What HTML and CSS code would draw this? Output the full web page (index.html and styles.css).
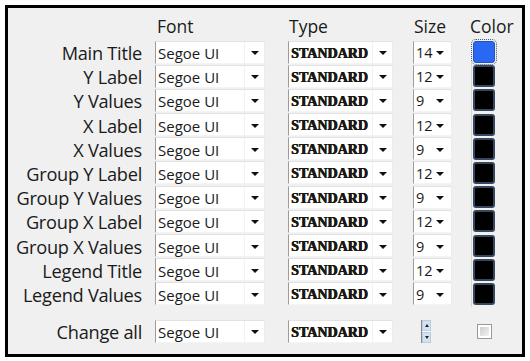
FILE: index.html
```html
<!DOCTYPE html>
<html>
<head>
<meta charset="utf-8">
<link rel="stylesheet" href="styles.css">
</head>
<body>
<div class="frame">
  <div class="row head">
    <div></div>
    <div class="h h-font">Font</div>
    <div class="h">Type</div>
    <div class="h">Size</div>
    <div class="h h-color">Color</div>
  </div>

  <div class="row">
    <div class="lbl">Main Title</div>
    <div class="combo font"><span>Segoe UI</span><i class="btn"><b class="arr"></b></i></div>
    <div class="combo type"><span>STANDARD</span><i class="btn"><b class="arr"></b></i></div>
    <div class="combo size"><span>14</span><b class="arr"></b></div>
    <div class="swcell first"><div class="sw blue"></div></div>
  </div>
  <div class="row">
    <div class="lbl">Y Label</div>
    <div class="combo font"><span>Segoe UI</span><i class="btn"><b class="arr"></b></i></div>
    <div class="combo type"><span>STANDARD</span><i class="btn"><b class="arr"></b></i></div>
    <div class="combo size"><span>12</span><b class="arr"></b></div>
    <div class="swcell"><div class="sw"></div></div>
  </div>
  <div class="row">
    <div class="lbl">Y Values</div>
    <div class="combo font"><span>Segoe UI</span><i class="btn"><b class="arr"></b></i></div>
    <div class="combo type"><span>STANDARD</span><i class="btn"><b class="arr"></b></i></div>
    <div class="combo size"><span>9</span><b class="arr"></b></div>
    <div class="swcell"><div class="sw"></div></div>
  </div>
  <div class="row">
    <div class="lbl">X Label</div>
    <div class="combo font"><span>Segoe UI</span><i class="btn"><b class="arr"></b></i></div>
    <div class="combo type"><span>STANDARD</span><i class="btn"><b class="arr"></b></i></div>
    <div class="combo size"><span>12</span><b class="arr"></b></div>
    <div class="swcell"><div class="sw"></div></div>
  </div>
  <div class="row">
    <div class="lbl">X Values</div>
    <div class="combo font"><span>Segoe UI</span><i class="btn"><b class="arr"></b></i></div>
    <div class="combo type"><span>STANDARD</span><i class="btn"><b class="arr"></b></i></div>
    <div class="combo size"><span>9</span><b class="arr"></b></div>
    <div class="swcell"><div class="sw"></div></div>
  </div>
  <div class="row">
    <div class="lbl">Group Y Label</div>
    <div class="combo font"><span>Segoe UI</span><i class="btn"><b class="arr"></b></i></div>
    <div class="combo type"><span>STANDARD</span><i class="btn"><b class="arr"></b></i></div>
    <div class="combo size"><span>12</span><b class="arr"></b></div>
    <div class="swcell"><div class="sw"></div></div>
  </div>
  <div class="row">
    <div class="lbl">Group Y Values</div>
    <div class="combo font"><span>Segoe UI</span><i class="btn"><b class="arr"></b></i></div>
    <div class="combo type"><span>STANDARD</span><i class="btn"><b class="arr"></b></i></div>
    <div class="combo size"><span>9</span><b class="arr"></b></div>
    <div class="swcell"><div class="sw"></div></div>
  </div>
  <div class="row">
    <div class="lbl">Group X Label</div>
    <div class="combo font"><span>Segoe UI</span><i class="btn"><b class="arr"></b></i></div>
    <div class="combo type"><span>STANDARD</span><i class="btn"><b class="arr"></b></i></div>
    <div class="combo size"><span>12</span><b class="arr"></b></div>
    <div class="swcell"><div class="sw"></div></div>
  </div>
  <div class="row">
    <div class="lbl">Group X Values</div>
    <div class="combo font"><span>Segoe UI</span><i class="btn"><b class="arr"></b></i></div>
    <div class="combo type"><span>STANDARD</span><i class="btn"><b class="arr"></b></i></div>
    <div class="combo size"><span>9</span><b class="arr"></b></div>
    <div class="swcell"><div class="sw"></div></div>
  </div>
  <div class="row">
    <div class="lbl">Legend Title</div>
    <div class="combo font"><span>Segoe UI</span><i class="btn"><b class="arr"></b></i></div>
    <div class="combo type"><span>STANDARD</span><i class="btn"><b class="arr"></b></i></div>
    <div class="combo size"><span>12</span><b class="arr"></b></div>
    <div class="swcell"><div class="sw"></div></div>
  </div>
  <div class="row">
    <div class="lbl">Legend Values</div>
    <div class="combo font"><span>Segoe UI</span><i class="btn"><b class="arr"></b></i></div>
    <div class="combo type"><span>STANDARD</span><i class="btn"><b class="arr"></b></i></div>
    <div class="combo size"><span>9</span><b class="arr"></b></div>
    <div class="swcell"><div class="sw"></div></div>
  </div>

  <div class="row all">
    <div class="lbl">Change all</div>
    <div class="combo font"><span>Segoe UI</span><i class="btn"><b class="arr"></b></i></div>
    <div class="combo type"><span>STANDARD</span><i class="btn"><b class="arr"></b></i></div>
    <div class="spincell">
      <div class="spin"><div class="sb"><b class="up"></b></div><div class="sb"><b class="dn"></b></div></div>
    </div>
    <div class="chkcell"><div class="chk"><div class="chk-in"></div></div></div>
  </div>
</div>
</body>
</html>
```

FILE: styles.css
```css
html, body {
  margin: 0;
  padding: 0;
  background: #ffffff;
}

.frame {
  box-sizing: border-box;
  margin: 5px 0 0 5px;
  width: 520px;
  height: 352px;
  border: 3px solid #000;
  background: #f0f0f0;
  display: flex;
  flex-direction: column;
}

.row {
  display: grid;
  grid-template-columns: 147px 133px 125px 58px 1fr;
  height: 24.2px;
  align-items: center;
}

.row.head {
  height: 31px;
  align-items: end;
}

.h {
  font-family: "Open Sans", sans-serif;
  font-size: 17.5px;
  color: #1a1a1a;
  line-height: 22px;
  padding-bottom: 2px;
  padding-left: 1px;
}
.h-font { padding-left: 2px; }
.h-color { margin-left: -2px; }

.lbl {
  font-family: "Open Sans", sans-serif;
  font-size: 18.2px;
  color: #1a1a1a;
  text-align: right;
  padding-right: 13px;
  white-space: nowrap;
  line-height: 24px;
  letter-spacing: -0.25px;
  padding-top: 2px;
}

.combo {
  box-sizing: border-box;
  height: 23px;
  background: #fff;
  border-top: 1px solid #e2e2e2;
  border-left: 1px solid #9c9c9c;
  border-right: 1px solid #ececec;
  border-bottom: 1px solid #f4f4f4;
  display: flex;
  align-items: center;
}
.combo span {
  flex: 1;
  white-space: nowrap;
}
.combo.font { width: 110px; }
.combo.font span {
  font-family: "Open Sans", sans-serif;
  font-size: 15px;
  color: #1a1a1a;
  padding-left: 2px;
  padding-top: 2px;
}
.combo.type { width: 105px; }
.combo.type span {
  font-family: "Liberation Serif", serif;
  font-weight: 700;
  font-size: 14px;
  color: #1b1812;
  padding-left: 2px;
  padding-top: 3px;
  text-shadow: 0.6px 0 0 #1b1812, 0 0.3px 0 #1b1812;
}
.combo.size { width: 39px; }
.combo.size span {
  font-family: "Open Sans", sans-serif;
  font-size: 14.5px;
  color: #1a1a1a;
  padding-left: 2px;
  padding-top: 1px;
}

.btn {
  display: flex;
  align-items: center;
  justify-content: center;
  width: 20px;
  height: 21px;
  border-left: 1px solid #f2f2f2;
  box-sizing: border-box;
  padding-top: 2px;
}

.arr {
  display: block;
  width: 0;
  height: 0;
  border-left: 4px solid transparent;
  border-right: 4px solid transparent;
  border-top: 4px solid #111;
}
.combo.size .arr { margin-right: 7px; margin-top: 2px; }

.swcell {
  height: 100%;
  display: flex;
  align-items: center;
  border-left: 1px solid #d4d4d4;
}
.swcell.first { border-left-color: transparent; }

.sw {
  box-sizing: border-box;
  width: 22px;
  height: 22px;
  margin-left: 1px;
  border: 2px solid #34475f;
  border-radius: 3px;
  background: #000;
}
.sw.blue {
  background: #2a68f4;
  border: 1px solid #2053c8;
  outline: 1px dotted #555;
  outline-offset: 1px;
}

.row.all {
  margin-top: 13px;
  height: 25px;
}

.spincell {
  padding-left: 8px;
}
.spin {
  box-sizing: border-box;
  width: 10px;
  height: 23px;
  border-left: 1px solid #8a8a8a;
  display: flex;
  flex-direction: column;
  gap: 1px;
  background: #fff;
}
.sb {
  flex: 1;
  background: #d3e2f2;
  border: 1px solid #b8cbe0;
  display: flex;
  align-items: center;
  justify-content: center;
}
.up, .dn {
  display: block;
  width: 0;
  height: 0;
  border-left: 2.5px solid transparent;
  border-right: 2.5px solid transparent;
}
.up { border-bottom: 3px solid #222; }
.dn { border-top: 3px solid #222; }

.chkcell {
  padding-left: 6px;
}
.chk {
  box-sizing: border-box;
  width: 15px;
  height: 15px;
  border: 1px solid #9a9a9a;
  background: #fff;
  padding: 2px;
}
.chk-in {
  width: 100%;
  height: 100%;
  background: linear-gradient(135deg, #cfcfcf, #f2f2f2);
}
```
